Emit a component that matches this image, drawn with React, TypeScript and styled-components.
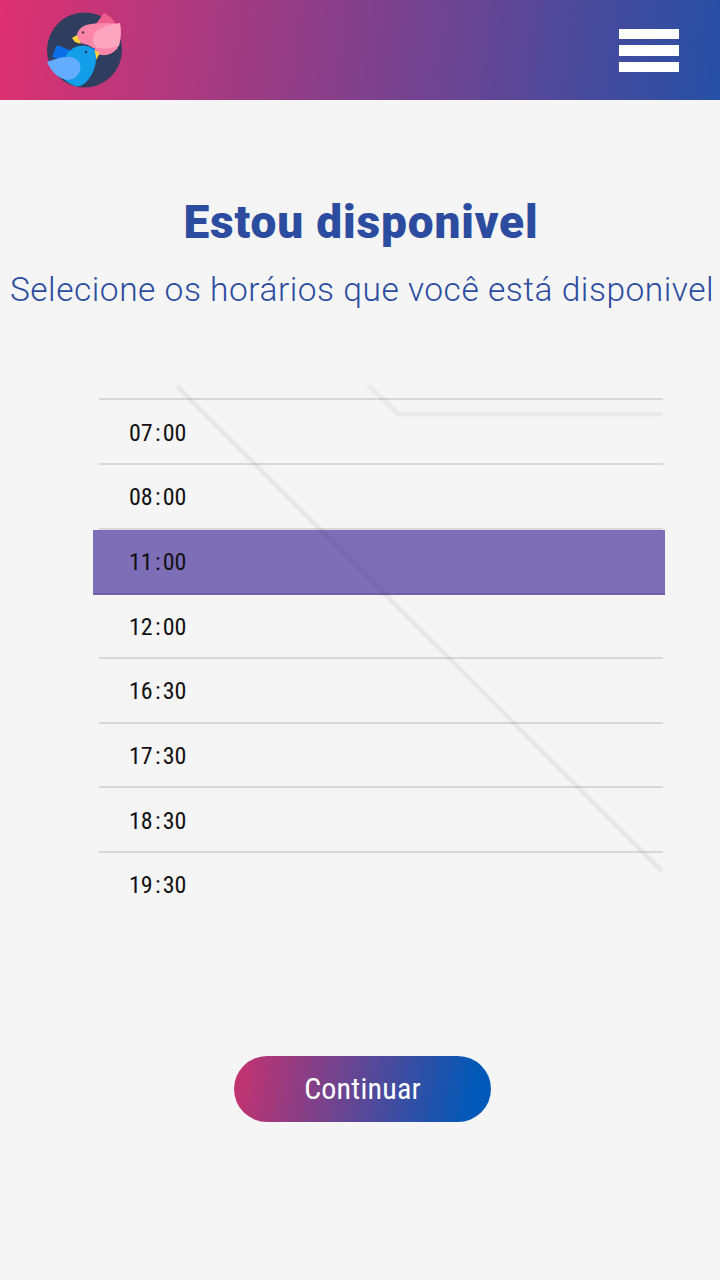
import React from "react";
import styled, { createGlobalStyle } from "styled-components";

const GlobalStyle = createGlobalStyle`
  html, body {
    margin: 0;
    padding: 0;
    background: #f5f5f5;
    font-family: "Roboto", "Liberation Sans", sans-serif;
  }
`;

const Page = styled.div`
  width: 720px;
  height: 1280px;
  overflow: hidden;
  display: flex;
  flex-direction: column;
  background: #f5f5f5;
`;

const Header = styled.header`
  height: 100px;
  flex: none;
  display: flex;
  align-items: center;
  justify-content: space-between;
  padding: 0 41px 0 44px;
  background: linear-gradient(97deg, #de3170 0%, #2650a6 100%);
`;

const Logo = styled.svg`
  width: 84px;
  height: 84px;
  display: block;
`;

const MenuButton = styled.button`
  width: 60px;
  padding: 0;
  border: 0;
  background: none;
  display: flex;
  flex-direction: column;
  gap: 6px;
  margin-top: 1px;
`;

const MenuBar = styled.span`
  display: block;
  height: 10.5px;
  background: #fff;
`;

const Title = styled.h1`
  margin: 97px 0 0;
  text-align: center;
  padding-left: 2px;
  font-size: 46px;
  line-height: 50px;
  font-weight: 900;
  letter-spacing: 0.85px;
  color: #2c4c9f;
`;

const Subtitle = styled.p`
  margin: 23px 0 0;
  text-align: center;
  padding-left: 4px;
  white-space: nowrap;
  font-size: 33.5px;
  line-height: 40px;
  font-weight: 300;
  letter-spacing: 0.52px;
  color: #2c4c9f;
`;

const ListWrap = styled.div`
  position: relative;
  margin: 75.4px 57px 0 99px;
  padding-top: 13px;
`;

const Streaks = styled.svg`
  position: absolute;
  left: 0;
  top: 0;
  width: 564px;
  height: 490px;
  pointer-events: none;
  z-index: 2;
`;

const Row = styled.div<{ $selected?: boolean }>`
  position: relative;
  z-index: ${({ $selected }) => ($selected ? 1 : 0)};
  height: 60.65px;
  display: flex;
  align-items: center;
  padding: 2px 0 0 30px;
  border-top: 2px solid #d8d8d8;

  ${({ $selected }) =>
    $selected &&
    `
    &::before {
      content: "";
      position: absolute;
      left: -6px;
      right: -2px;
      top: 0;
      bottom: -2.4px;
      background: #7e6eb8;
      box-shadow: inset 0 -2px 0 #7260a6;
    }
  `}
`;

const Time = styled.span`
  position: relative;
  font-size: 24px;
  font-stretch: 75%;
  color: #111;
`;

const Colon = styled.span`
  margin: 0 2.2px;
`;

const Footer = styled.div`
  display: flex;
  justify-content: center;
  margin-top: 140.2px;
  padding-left: 5px;
`;

const ContinueButton = styled.button`
  width: 257px;
  height: 66px;
  border: 0;
  border-radius: 33px;
  color: #fff;
  font-family: "Roboto", "Liberation Sans", sans-serif;
  font-size: 30px;
  font-weight: 400;
  font-stretch: 85%;
  letter-spacing: 0.2px;
  background: linear-gradient(100deg, #c8326f 0%, #0059b8 92%);
`;

const times = ["07:00", "08:00", "11:00", "12:00", "16:30", "17:30", "18:30", "19:30"];

export default function App() {
  return (
    <Page>
      <GlobalStyle />
      <Header>
        <Logo viewBox="44 8 84 84">
          <circle cx="84.5" cy="50" r="37.5" fill="#2f3d5e" />
          <path d="M96 24 L104 13 Q113 17 116 25 L106 32 Z" fill="#ef5f8e" />
          <path d="M77 34 Q80 25 91 24 Q102 22 120 24 Q122 40 117 49 Q108 58 98 54 Q92 45 84 44 Q77 42 77 34 Z" fill="#fb86a9" />
          <path d="M72 38 L77 35 L81 44 L75 42 Z" fill="#ffd43b" />
          <path d="M120 23 Q100 26 95 33 Q90 42 96 47 Q105 51 119 46 Q122 34 120 23 Z" fill="#fba4bf" />
          <circle cx="83" cy="32.5" r="1.2" fill="#5a3440" />
          <path d="M52 57 L57 45 L72 51 L70 62 Z" fill="#0b6fe8" />
          <path d="M94 50 L100 53 L96 60 Z" fill="#ffd43b" />
          <path d="M89 48 L95 48 L94 52 Z" fill="#0b6fe8" />
          <path d="M66 56 Q70 46 84 45.5 Q96 47 96 58 Q96 70 88 80 Q82 87 76 86.5 Q64 82 58 72 Z" fill="#129ee8" />
          <path d="M47 62 Q62 56 72 57 Q81 60 80.5 69 Q78 79 68 80 Q54 78 47 62 Z" fill="#64acff" />
          <circle cx="86" cy="52" r="1.2" fill="#28364f" />
        </Logo>
        <MenuButton aria-label="Menu">
          <MenuBar />
          <MenuBar />
          <MenuBar />
        </MenuButton>
      </Header>
      <Title>Estou disponivel</Title>
      <Subtitle>Selecione os horários que você está disponivel</Subtitle>
      <ListWrap>
        {times.map((t) => {
          const [h, m] = t.split(":");
          return (
            <Row key={t} $selected={t === "11:00"}>
              <Time>
                {h}
                <Colon>:</Colon>
                {m}
              </Time>
            </Row>
          );
        })}
        <Streaks viewBox="0 0 564 490">
          <defs>
            <filter id="soft" x="-5%" y="-5%" width="110%" height="110%">
              <feGaussianBlur stdDeviation="0.9" />
            </filter>
          </defs>
          <g filter="url(#soft)" fill="none" stroke="#000">
            <path d="M77 0 L564 487" strokeOpacity="0.07" strokeWidth="4" />
            <path d="M269 0 L299 29 L564 29" strokeOpacity="0.06" strokeWidth="4" />
          </g>
        </Streaks>
      </ListWrap>
      <Footer>
        <ContinueButton>Continuar</ContinueButton>
      </Footer>
    </Page>
  );
}
